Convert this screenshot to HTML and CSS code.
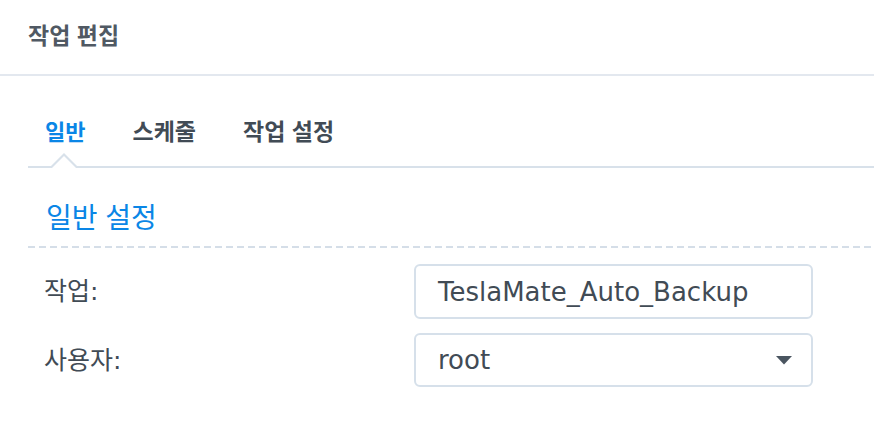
FILE: index.html
```html
<!DOCTYPE html>
<html lang="ko">
<head>
<meta charset="utf-8">
<title>작업 편집</title>
<link rel="stylesheet" href="styles.css">
</head>
<body>
<div class="dialog">
  <header class="header">
    <h1 class="title">작업 편집</h1>
  </header>
  <div class="content">
    <nav class="tabs">
      <span class="tab active">일반</span>
      <span class="tab">스케줄</span>
      <span class="tab">작업 설정</span>
    </nav>
    <div class="section-head">
      <h2 class="section-title">일반 설정</h2>
    </div>
    <div class="form">
      <div class="row">
        <label class="label">작업:</label>
        <div class="field">TeslaMate_Auto_Backup</div>
      </div>
      <div class="row">
        <label class="label">사용자:</label>
        <div class="field select">
          <span>root</span>
          <svg class="arrow" width="16" height="9" viewBox="0 0 16 9"><path d="M0 0 H16 L8 8.5 Z" fill="#4a5560"/></svg>
        </div>
      </div>
    </div>
  </div>
</div>
</body>
</html>
```
FILE: styles.css
```css
html, body {
  margin: 0;
  padding: 0;
  background: #ffffff;
}
body {
  font-family: "DejaVu Sans", "Noto Sans CJK KR", sans-serif;
  color: #414b55;
}
.dialog {
  width: 874px;
  height: 438px;
  overflow: hidden;
}
.header {
  box-sizing: border-box;
  height: 76px;
  padding: 23px 0 0 28px;
  border-bottom: 2px solid #e3e8ef;
}
.title {
  margin: 0;
  font-family: "Noto Sans CJK KR", sans-serif;
  font-size: 23px;
  line-height: 1;
  font-weight: 700;
  color: #505963;
}
.content {
  padding-left: 28px;
}
.tabs {
  box-sizing: border-box;
  height: 92px;
  padding: 43px 0 0 17px;
  display: flex;
  gap: 47px;
  border-bottom: 2px solid #d8e1ea;
  position: relative;
}
.tab {
  font-family: "Noto Sans CJK KR", sans-serif;
  font-size: 23px;
  line-height: 1;
  font-weight: 700;
  color: #414b55;
  position: relative;
  height: 23px;
}
.tab.active {
  font-size: 22px;
  color: #0a86e6;
}
.tab.active::before,
.tab.active::after {
  content: "";
  position: absolute;
  left: 50%;
  width: 0;
  height: 0;
  border-style: solid;
}
.tab.active::before {
  top: 34px;
  margin-left: -15px;
  border-width: 0 14px 14px 14px;
  border-color: transparent transparent #d8e1ea transparent;
}
.tab.active::after {
  top: 37px;
  margin-left: -13px;
  border-width: 0 12px 12px 12px;
  border-color: transparent transparent #ffffff transparent;
}
.section-head {
  box-sizing: border-box;
  height: 80px;
  padding: 34px 0 0 18px;
  background-image: repeating-linear-gradient(to right, #d5dee8 0 7px, transparent 7px 11px);
  background-size: 100% 2px;
  background-repeat: no-repeat;
  background-position: left bottom;
}
.section-title {
  margin: 0;
  font-family: "Noto Sans CJK KR", sans-serif;
  font-size: 28px;
  line-height: 1;
  font-weight: 400;
  color: #0a86e6;
}
.form {
  padding: 16px 0 0 16px;
  display: flex;
  flex-direction: column;
  gap: 14px;
}
.row {
  display: flex;
  align-items: center;
}
.label {
  width: 370px;
  font-size: 25px;
  line-height: 1;
  color: #414b55;
}
.field {
  box-sizing: border-box;
  width: 399px;
  height: 55px;
  border: 2px solid #d6e0ea;
  border-radius: 6px;
  padding: 0 0 0 22px;
  display: flex;
  align-items: center;
  font-size: 26px;
  color: #414b55;
}
.field.select {
  height: 54px;
  justify-content: space-between;
  padding-right: 19px;
}
.arrow {
  display: block;
}
```
